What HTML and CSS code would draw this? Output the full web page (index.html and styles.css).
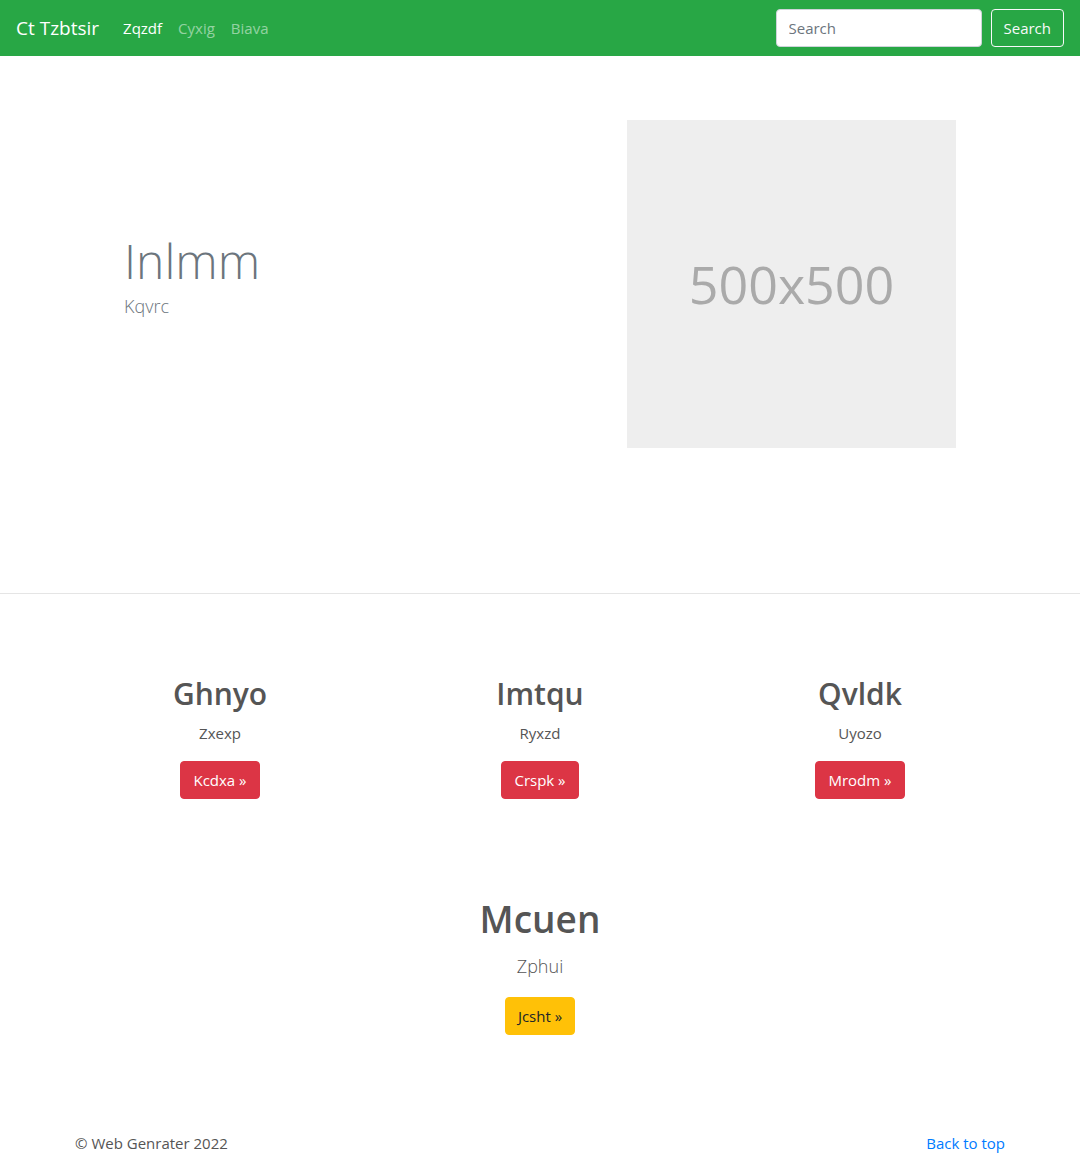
FILE: index.html
```html
<!DOCTYPE html>
<html lang="en">
<head>
<meta charset="utf-8">
<title>Ct Tzbtsir</title>
<link rel="stylesheet" href="styles.css">
</head>
<body>
<nav class="navbar">
  <a class="brand" href="#">Ct Tzbtsir</a>
  <ul class="nav">
    <li><a class="nav-link active" href="#">Zqzdf</a></li>
    <li><a class="nav-link" href="#">Cyxig</a></li>
    <li><a class="nav-link" href="#">Biava</a></li>
  </ul>
  <form class="search">
    <input class="search-input" type="text" placeholder="Search">
    <button class="btn btn-outline-light" type="button">Search</button>
  </form>
</nav>

<section class="hero">
  <div class="hero-text">
    <h1 class="display">Inlmm</h1>
    <p class="lead muted">Kqvrc</p>
  </div>
  <div class="placeholder">500x500</div>
</section>

<hr class="divider">

<section class="features">
  <div class="feature">
    <h2>Ghnyo</h2>
    <p>Zxexp</p>
    <a class="btn btn-danger" href="#">Kcdxa &raquo;</a>
  </div>
  <div class="feature">
    <h2>Imtqu</h2>
    <p>Ryxzd</p>
    <a class="btn btn-danger" href="#">Crspk &raquo;</a>
  </div>
  <div class="feature">
    <h2>Qvldk</h2>
    <p>Uyozo</p>
    <a class="btn btn-danger" href="#">Mrodm &raquo;</a>
  </div>
</section>

<section class="callout">
  <h1>Mcuen</h1>
  <p class="lead">Zphui</p>
  <a class="btn btn-warning" href="#">Jcsht &raquo;</a>
</section>

<footer class="footer">
  <span>&copy; Web Genrater 2022</span>
  <a href="#">Back to top</a>
</footer>
</body>
</html>
```

FILE: styles.css
```css
* { box-sizing: border-box; }
html, body { margin: 0; padding: 0; }
body {
  font-family: "Open Sans", "Noto Sans", "Liberation Sans", sans-serif;
  font-size: 15px;
  line-height: 24px;
  color: #555;
  background: #fff;
}
a { text-decoration: none; }
h1, h2, p { margin: 0; }

.navbar {
  height: 56px;
  background: #28a745;
  display: flex;
  align-items: center;
  padding: 0 16px;
}
.brand {
  color: #fff;
  font-size: 19px;
  line-height: 30px;
  margin-right: 16px;
}
.nav {
  list-style: none;
  margin: 0;
  padding: 0;
  display: flex;
  flex: 1;
}
.nav-link {
  display: block;
  padding: 8px;
  font-size: 15px;
  color: rgba(255,255,255,.5);
}
.nav-link.active { color: #fff; }
.search { display: flex; align-items: center; }
.search-input {
  width: 206px;
  height: 38px;
  padding: 6px 12px;
  font: inherit;
  color: #495057;
  border: 1px solid #ced4da;
  border-radius: 4px;
  margin-right: 9px;
}
.search-input::placeholder { color: #6c757d; }

.btn {
  display: inline-block;
  font: inherit;
  font-size: 15px;
  line-height: 24px;
  padding: 6px 12px;
  border: 1px solid transparent;
  border-radius: 4px;
  cursor: pointer;
}
.btn-outline-light { color: #f8f9fa; background: transparent; border-color: #f8f9fa; }
.btn-danger { color: #fff; background: #dc3545; border-color: #dc3545; }
.btn-warning { color: #212529; background: #ffc107; border-color: #ffc107; }

.hero {
  display: grid;
  grid-template-columns: 503px 329px;
  align-items: center;
  padding: 64px 0 145px 124px;
}
.display {
  font-size: 48px;
  font-weight: 300;
  line-height: 60px;
  color: #6c757d;
}
.lead { font-size: 18px; font-weight: 300; line-height: 30px; }
.hero .lead { margin-bottom: 16px; }
.muted { color: #6c757d; }
.placeholder {
  width: 329px;
  height: 328px;
  background: #eee;
  color: #aaa;
  font-size: 52px;
  display: flex;
  align-items: center;
  justify-content: center;
}

.divider {
  margin: 0;
  border: 0;
  border-top: 1px solid rgba(0,0,0,.1);
}

.features {
  width: 960px;
  margin: 0 auto;
  padding-top: 81px;
  display: grid;
  grid-template-columns: repeat(3, 1fr);
  text-align: center;
}
.feature { padding: 0 15px; }
.feature h2 { font-size: 30px; font-weight: 600; line-height: 38px; margin-bottom: 8px; }
.feature p { margin-bottom: 16px; }

.callout {
  text-align: center;
  padding-top: 96px;
}
.callout h1 { font-size: 37px; font-weight: 600; line-height: 48px; margin-bottom: 8px; }
.callout .lead { margin-bottom: 16px; }

.footer {
  width: 960px;
  margin: 0 auto;
  padding: 96px 15px 0;
  display: flex;
  justify-content: space-between;
  color: #555;
}
.footer a { color: #007bff; }
```
